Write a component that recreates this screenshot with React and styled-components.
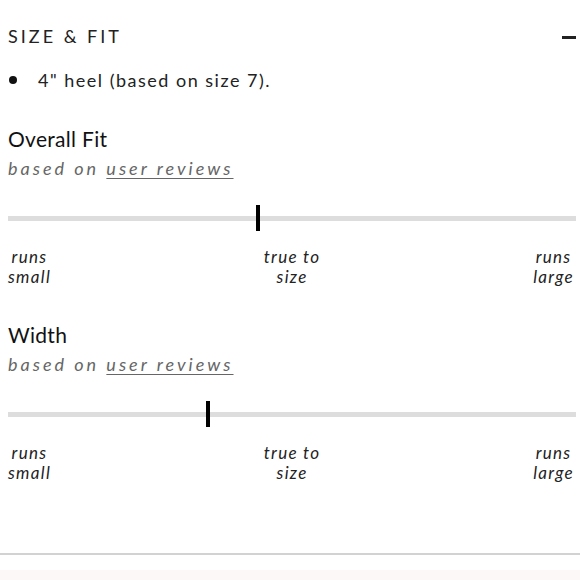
import React from "react";
import styled, { createGlobalStyle } from "styled-components";

const Global = createGlobalStyle`
  html, body { margin: 0; padding: 0; background: #fff; }
  body { font-family: Lato, "Open Sans", sans-serif; color: #1a1a1a; }
`;

const Page = styled.div`
  width: 580px;
  height: 580px;
  display: flex;
  flex-direction: column;
  overflow: hidden;
`;

const Content = styled.div`
  padding: 0 4px 0 8px;
  display: flex;
  flex-direction: column;
`;

const Header = styled.div`
  display: flex;
  justify-content: space-between;
  align-items: center;
  height: 30px;
  margin-top: 21px;
`;

const Title = styled.h2`
  margin: 0;
  font-size: 18px;
  font-weight: 400;
  letter-spacing: 3px;
  color: #222;
`;

const Minus = styled.span`
  width: 14px;
  height: 3px;
  margin-top: 3px;
  background: #222;
`;

const Bullets = styled.ul`
  list-style: none;
  margin: 17px 0 0;
  padding: 0;
`;

const Bullet = styled.li`
  display: flex;
  align-items: center;
  font-size: 18px;
  line-height: 24px;
  letter-spacing: 1.5px;
  color: #222;
  &::before {
    content: "";
    width: 8px;
    height: 8px;
    border-radius: 50%;
    background: #111;
    margin: 0 21px 0 1px;
  }
`;

const Section = styled.section`
  display: flex;
  flex-direction: column;
  margin-top: ${(p) => p.$top}px;
`;

const Heading = styled.h3`
  margin: 0;
  font-size: 21px;
  font-weight: 400;
  line-height: 28px;
  letter-spacing: 0.3px;
  color: #111;
`;

const Sub = styled.p`
  margin: 2px 0 0;
  font-size: 18px;
  line-height: 26px;
  font-style: italic;
  letter-spacing: 3px;
  color: #666;
  a {
    color: #666;
    text-decoration: underline;
    text-underline-offset: 3px;
  }
`;

const Track = styled.div`
  position: relative;
  height: 5px;
  background: #ddd;
  margin-top: 35px;
`;

const Marker = styled.span`
  position: absolute;
  top: -11px;
  width: 4px;
  height: 26px;
  background: #000;
  transform: translateX(-2px);
`;

const Labels = styled.div`
  display: flex;
  justify-content: space-between;
  margin-top: 26px;
  padding-right: 2px;
`;

const Label = styled.span`
  font-size: 17px;
  line-height: 20px;
  font-style: italic;
  letter-spacing: 1.3px;
  color: #222;
  text-align: center;
`;

const Spacer = styled.div`
  flex: 1;
`;

const Divider = styled.div`
  height: 2px;
  background: #d2d2d2;
`;

const Footer = styled.div`
  height: 10px;
  margin-top: 15px;
  background: #fcf8f8;
`;

function Fit({ title, pos, top }) {
  return (
    <Section $top={top}>
      <Heading>{title}</Heading>
      <Sub>
        based on <a>user reviews</a>
      </Sub>
      <Track>
        <Marker style={{ left: `${pos}%` }} />
      </Track>
      <Labels>
        <Label>runs<br />small</Label>
        <Label>true to<br />size</Label>
        <Label>runs<br />large</Label>
      </Labels>
    </Section>
  );
}

export default function App() {
  return (
    <Page>
      <Global />
      <Content>
        <Header>
          <Title>SIZE &amp; FIT</Title>
          <Minus />
        </Header>
        <Bullets>
          <Bullet>4" heel (based on size 7).</Bullet>
        </Bullets>
        <Fit title="Overall Fit" pos={44} top={33} />
        <Fit title="Width" pos={35.2} top={34} />
      </Content>
      <Spacer />
      <Divider />
      <Footer />
    </Page>
  );
}
